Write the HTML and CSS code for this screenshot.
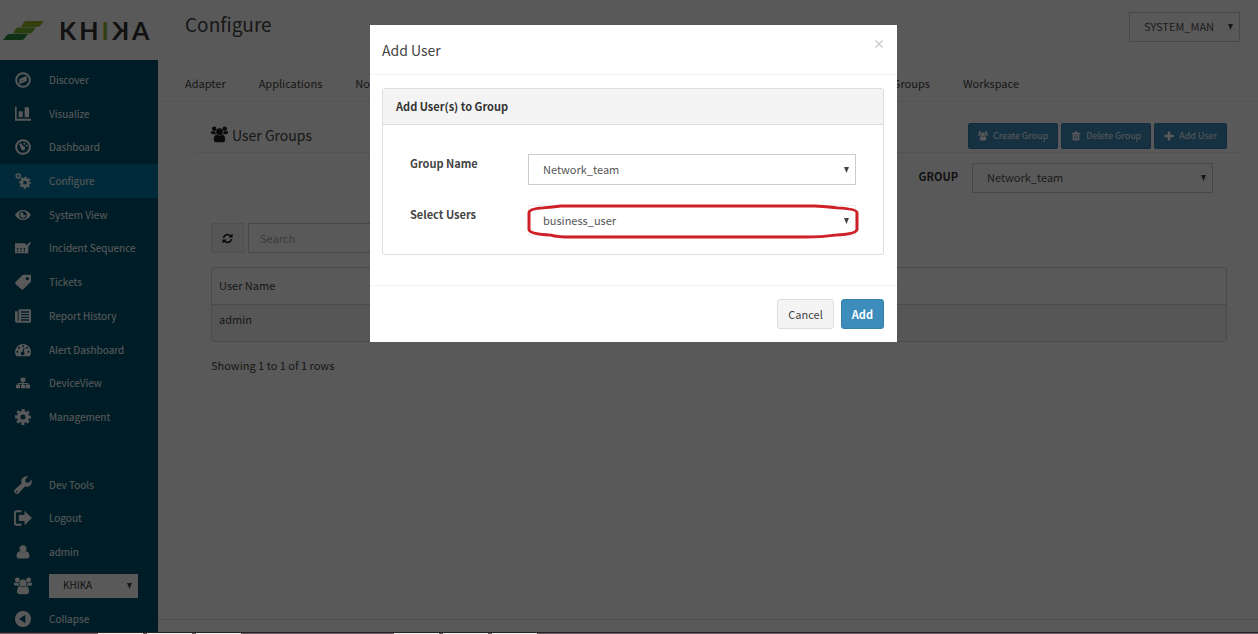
FILE: index.html
```html
<!DOCTYPE html>
<html lang="en">
<head>
    <meta charset="UTF-8">
    <meta name="viewport" content="width=device-width, initial-scale=1.0">
    <title>Khika - Configure</title>
    <link rel="stylesheet" href="styles.css">
</head>
<body>
    <!-- icon set -->
    <svg class="sprite" aria-hidden="true">
        <symbol id="i-compass" viewBox="0 0 24 24">
            <circle cx="12" cy="12" r="10.300" fill="none" stroke="currentColor" stroke-width="3"/>
            <path fill-rule="evenodd" d="M17.500 5.500v8L6.500 18.500v-8zM10 12.300v2l3-1.400z"/>
        </symbol>
        <symbol id="i-chart" viewBox="0 0 24 24">
            <path d="M0 1h2.500v18H24V22H0zM5.500 8h6v9h-6zM14.500 2h6.500v15h-6.500z"/>
        </symbol>
        <symbol id="i-dash" viewBox="0 0 24 24">
            <circle cx="12" cy="12" r="10.300" fill="none" stroke="currentColor" stroke-width="3"/>
            <path d="M6 7.500l2.300-1.500 4 4.500a3.200 3.200 0 1 1-3.500 2.600z"/>
            <circle cx="14" cy="7" r="1.500"/><circle cx="17.500" cy="10" r="1.500"/>
        </symbol>
        <symbol id="i-gear" viewBox="0 0 24 24">
            <circle cx="12" cy="12" r="6.500" fill="none" stroke="currentColor" stroke-width="5.400"/>
            <circle cx="12" cy="12" r="10" fill="none" stroke="currentColor" stroke-width="4" stroke-dasharray="4.400 3.454" stroke-dashoffset="2.200"/>
        </symbol>
        <symbol id="i-gears" viewBox="0 0 24 24">
            <circle cx="15" cy="14.500" r="4.900" fill="none" stroke="currentColor" stroke-width="4"/>
            <circle cx="15" cy="14.500" r="7.600" fill="none" stroke="currentColor" stroke-width="2.800" stroke-dasharray="3.400 2.569" stroke-dashoffset="1.700"/>
            <circle cx="5" cy="4.500" r="2.700" fill="none" stroke="currentColor" stroke-width="2"/>
            <circle cx="5" cy="4.500" r="4" fill="none" stroke="currentColor" stroke-width="1.400" stroke-dasharray="2 1.142" stroke-dashoffset="1"/>
        </symbol>
        <symbol id="i-eye" viewBox="0 0 24 24">
            <path fill-rule="evenodd" d="M0 12q5-7.500 12-7.500T24 12q-5 7.500-12 7.500T0 12zm12-5.600a5.600 5.600 0 1 0 0 11.200 5.600 5.600 0 0 0 0-11.200z"/>
            <path d="M12 8a4 4 0 1 0 4 4l-3.500.500z"/>
        </symbol>
        <symbol id="i-incident" viewBox="0 0 24 24">
            <path fill-rule="evenodd" d="M0 5h15l2.500 3L22 3l2 1.500-4 5.500v10H0zM3 12v2.500h2V12zm5 0v2.500h2V12zm5 0v2.500h2V12zM3 16v2h2v-2zm5 0v2h2v-2zm5 0v2h2v-2z"/>
        </symbol>
        <symbol id="i-tag" viewBox="0 0 24 24">
            <path fill-rule="evenodd" d="M13 1h9.500Q24 1 24 2.500V10q0 1.500-1 2.500L12.500 23q-1.500 1.300-3 0L.800 15q-1.300-1.500 0-3L11 2q1-1 2-1zm5.500 3.500a2.400 2.400 0 1 0 .01 0z"/>
        </symbol>
        <symbol id="i-news" viewBox="0 0 24 24">
            <path fill-rule="evenodd" d="M6 2h16.500Q24 2 24 3.500v17q0 1.500-1.500 1.500H3q-3 0-3-3V5h4v14h1.500V3zm3 3v2h12V5zm0 4v2h12V9zm0 4v2h12v-2zm0 4v2h12v-2z"/>
        </symbol>
        <symbol id="i-tacho" viewBox="0 0 24 24">
            <path fill-rule="evenodd" d="M2 21.500A12 12 0 1 1 22 21.500zM12 4.500a1.600 1.600 0 1 0 .01 0zM6 7a1.600 1.600 0 1 0 .01 0zm12 0a1.600 1.600 0 1 0 .01 0zM3.700 13a1.600 1.600 0 1 0 .01 0zm16.600 0a1.600 1.600 0 1 0 .01 0zM13.200 8.500L11 14.600a2.700 2.700 0 1 0 1.900.400l1.700-6z"/>
        </symbol>
        <symbol id="i-sitemap" viewBox="0 0 24 24">
            <path d="M8 3h8v7h-3v2h8v3h3v6h-7v-6h2v-1.500h-6V15h3v6H8.500v-6H11v-1.500H5V15h2v6H0v-6h3v-3h8v-2H8z"/>
        </symbol>
        <symbol id="i-wrench" viewBox="0 0 24 24">
            <path fill-rule="evenodd" d="M.500 18.500L10 10q-1-4.500 1.500-7.200T19 .500l-4 4 .500 4 4 .500 4-4q1 4.500-1.700 7.200T14.500 14L5.500 23.500q-2 1.200-4-.700T.500 18.500zm3 1.200a1 1 0 1 0 .01 0z"/>
        </symbol>
        <symbol id="i-logout" viewBox="0 0 24 24">
            <path d="M10 3H3.500Q1.300 3 1.300 5.200v13.600Q1.300 21 3.500 21H10" fill="none" stroke="currentColor" stroke-width="2.500"/>
            <path d="M6.500 8H14V2.500L24 12l-10 9.500V16H6.500z"/>
        </symbol>
        <symbol id="i-user" viewBox="0 0 24 24">
            <circle cx="12" cy="6.500" r="6"/>
            <path d="M6.500 10.500q5.500 4 11 0Q23 12 23 18.500q0 4.500-4 4.500h-14q-4 0-4-4.500 0-6.500 5.500-8z"/>
        </symbol>
        <symbol id="i-users" viewBox="0 0 24 24">
            <circle cx="4.500" cy="4" r="3.200"/><circle cx="19.500" cy="4" r="3.200"/><circle cx="12" cy="8" r="4.800"/>
            <path d="M7.500 12q4.500 3 9 0 3.500 1.500 3.500 7 0 4-3.500 4h-9Q4 23 4 19q0-5.500 3.500-7zM0 7.500h6q0 3 1.500 4H2.500Q0 11.500 0 9.500zM24 7.500h-6q0 3-1.500 4h5q2.500 0 2.500-2z"/>
        </symbol>
        <symbol id="i-collapse" viewBox="0 0 24 24">
            <path fill-rule="evenodd" d="M12 0a12 12 0 1 0 .01 0zM15.500 5.500v13L6 12z"/>
        </symbol>
        <symbol id="i-refresh" viewBox="0 0 24 24">
            <path d="M3 10.500a9.300 9.300 0 0 1 16-4M21 13.500a9.300 9.300 0 0 1-16 4" fill="none" stroke="currentColor" stroke-width="3.400"/>
            <path d="M23 1v9h-9zM1 23v-9h9z"/>
        </symbol>
        <symbol id="i-trash" viewBox="0 0 24 24">
            <path fill-rule="evenodd" d="M2 4h6l1-3h6l1 3h6v3H2zm2 4h16v13q0 2-2 2H6q-2 0-2-2zm3.500 2v10h1.500V10zm3.800 0v10h1.500V10zm3.700 0v10h1.500V10z"/>
        </symbol>
        <symbol id="i-plus" viewBox="0 0 24 24">
            <path d="M9 1h6v8h8v6h-8v8H9v-8H1V9h8z"/>
        </symbol>
    </svg>

    <div class="app">
        <aside class="side">
            <a class="logo" href="#" aria-label="Khika">
                <svg class="logo-mark" viewBox="0 0 41 19" aria-hidden="true">
                    <path d="M23 0h18l-4 5q-1 1-3 1H18l3-5q1-1 2-1z" fill="#98b52a"/>
                    <path d="M15 6.500h18l-4 5q-1 1-3 1H10l3-5q1-1 2-1z" fill="#78b52f"/>
                    <path d="M6 13h19l-4 5q-1 1-3 1H0l4-5q1-1 2-1z" fill="#2a8a3c"/>
                </svg>
                <span class="logo-text"><span>K</span><span>H</span><span class="green">I</span><span class="mirror">K</span><span>A</span></span>
            </a>
            <nav class="menu">
                <ul class="menu-top">
                    <li><a href="#"><svg class="icon"><use href="#i-compass"/></svg>Discover</a></li>
                    <li><a href="#"><svg class="icon"><use href="#i-chart"/></svg>Visualize</a></li>
                    <li><a href="#"><svg class="icon"><use href="#i-dash"/></svg>Dashboard</a></li>
                    <li class="active"><a href="#"><svg class="icon"><use href="#i-gears"/></svg>Configure</a></li>
                    <li><a href="#"><svg class="icon"><use href="#i-eye"/></svg>System View</a></li>
                    <li><a href="#"><svg class="icon"><use href="#i-incident"/></svg>Incident Sequence</a></li>
                    <li><a href="#"><svg class="icon"><use href="#i-tag"/></svg>Tickets</a></li>
                    <li><a href="#"><svg class="icon"><use href="#i-news"/></svg>Report History</a></li>
                    <li><a href="#"><svg class="icon"><use href="#i-tacho"/></svg>Alert Dashboard</a></li>
                    <li><a href="#"><svg class="icon small"><use href="#i-sitemap"/></svg>DeviceView</a></li>
                    <li><a href="#"><svg class="icon"><use href="#i-gear"/></svg>Management</a></li>
                </ul>
                <ul class="menu-bottom">
                    <li><a href="#"><svg class="icon large"><use href="#i-wrench"/></svg>Dev Tools</a></li>
                    <li><a href="#"><svg class="icon large"><use href="#i-logout"/></svg>Logout</a></li>
                    <li><a href="#"><svg class="icon small"><use href="#i-user"/></svg>admin</a></li>
                    <li class="tenant">
                        <svg class="icon large"><use href="#i-users"/></svg>
                        <select class="select" aria-label="Tenant"><option>KHIKA</option></select>
                    </li>
                    <li><a href="#"><svg class="icon"><use href="#i-collapse"/></svg>Collapse</a></li>
                </ul>
            </nav>
        </aside>

        <main class="main">
            <header class="top">
                <h1>Configure</h1>
                <select class="select workspace" aria-label="Workspace"><option>SYSTEM_MAN</option></select>
            </header>
            <nav class="tabs">
                <a href="#">Adapter</a>
                <a href="#">Applications</a>
                <a href="#">Nodes</a>
                <a href="#" class="tab-right">User Groups</a>
                <a href="#">Workspace</a>
            </nav>
            <section class="content">
                <div class="title-row">
                    <h2><svg class="icon"><use href="#i-users"/></svg>User Groups</h2>
                    <div class="actions">
                        <button class="btn-sm"><svg class="icon"><use href="#i-users"/></svg>Create Group</button>
                        <button class="btn-sm"><svg class="icon"><use href="#i-trash"/></svg>Delete Group</button>
                        <button class="btn-sm"><svg class="icon"><use href="#i-plus"/></svg>Add User</button>
                    </div>
                </div>
                <div class="filter">
                    <label for="group">GROUP</label>
                    <select class="select" id="group"><option>Network_team</option></select>
                </div>
                <div class="toolbar">
                    <button class="refresh" aria-label="Refresh"><svg class="icon"><use href="#i-refresh"/></svg></button>
                    <input class="search" type="text" placeholder="Search" aria-label="Search">
                </div>
                <div class="table-box">
                    <table>
                        <thead><tr><th>User Name</th></tr></thead>
                        <tbody><tr><td>admin</td></tr></tbody>
                    </table>
                </div>
                <p class="rows-info">Showing 1 to 1 of 1 rows</p>
            </section>
            <div class="bottom-line"></div>
        </main>
    </div>

    <!-- Add user dialog -->
    <div class="backdrop">
        <div class="modal" role="dialog" aria-labelledby="modal-title">
            <div class="modal-header">
                <h3 id="modal-title">Add User</h3>
                <button class="close" aria-label="Close">×</button>
            </div>
            <div class="modal-body">
                <div class="panel">
                    <h4>Add User(s) to Group</h4>
                    <div class="panel-body">
                        <div class="field">
                            <label for="group-name">Group Name</label>
                            <select class="select" id="group-name"><option>Network_team</option></select>
                        </div>
                        <div class="field">
                            <label for="users">Select Users</label>
                            <div class="marked">
                                <select class="select" id="users"><option>business_user</option></select>
                                <svg class="marker" viewBox="0 0 332 36" preserveAspectRatio="none" aria-hidden="true">
                                    <path d="M34 2H288Q305 3 310 4Q330 5 330 9V26Q330 31 308 32Q295 34 278 34H45Q30 34 24 32Q2 31 2 26V9Q2 5 16 4Q26 3 34 2Z"/>
                                </svg>
                            </div>
                        </div>
                    </div>
                </div>
            </div>
            <div class="modal-footer">
                <button class="btn">Cancel</button>
                <button class="btn primary">Add</button>
            </div>
        </div>
    </div>
    <div class="strip"><i></i><i></i><i></i><i class="far"></i><i></i><i></i></div>
</body>
</html>
```
FILE: styles.css
```css
* {
    box-sizing: border-box;
}
body {
    margin: 0;
    height: 100vh;
    display: flex;
    flex-direction: column;
    overflow: hidden;
    font-family: "Noto Sans CJK SC", "Liberation Sans", sans-serif;
    font-size: 11px;
    line-height: 18px;
    color: #444;
    background-color: #fff;
}
h1, h2, h3, h4, p, ul {
    margin: 0;
    padding: 0;
    font-weight: normal;
}
ul {
    list-style: none;
}
a {
    color: inherit;
    text-decoration: none;
}
button, input, select {
    font: inherit;
    color: inherit;
}
button {
    cursor: pointer;
}
.sprite {
    display: none;
}
.icon {
    width: 16px;
    height: 16px;
    flex: none;
    fill: currentColor;
}
.select {
    height: 31px;
    padding: 0 20px 2px 14px;
    border: 1px solid #ccc;
    border-radius: 0;
    appearance: none;
    color: #555;
    background: #fff url("data:image/svg+xml,%3Csvg xmlns='http://www.w3.org/2000/svg' width='5' height='6'%3E%3Cpath d='M0 0h5L2.5 6z' fill='%23444'/%3E%3C/svg%3E") no-repeat right 6px center;
}

/* layout */
.app {
    flex: 1;
    min-height: 0;
    display: flex;
}
.side {
    width: 158px;
    flex: none;
    display: flex;
    flex-direction: column;
}
.main {
    flex: 1;
    display: flex;
    flex-direction: column;
}

/* sidebar */
.logo {
    height: 60px;
    flex: none;
    display: flex;
    align-items: center;
    gap: 15px;
    padding-left: 3px;
}
.logo-mark {
    width: 41px;
    height: 19px;
}
.logo-text {
    display: flex;
    gap: 3px;
    font-family: Lato, sans-serif;
    font-size: 25px;
    line-height: 30px;
    font-weight: bold;
    color: #333;
}
.green {
    color: #86b52d;
}
.mirror {
    transform: scaleX(-1);
}
.menu {
    flex: 1;
    min-height: 0;
    overflow: hidden;
    padding-top: 3px;
    font-size: 10px;
    color: #fff;
    background-color: #005571;
}
.menu-top, .menu-bottom {
    display: grid;
    grid-auto-rows: 1fr;
    height: 371px;
}
.menu-bottom {
    height: 168px;
    margin-top: 34px;
}
.menu li {
    display: flex;
    align-items: center;
}
.menu li.active {
    background-color: #0079a5;
}
.menu a, .tenant {
    display: grid;
    grid-template-columns: 46px 1fr;
    align-items: center;
    padding-left: 3px;
}
.menu .tenant {
    display: grid;
}
.menu .icon {
    justify-self: center;
    margin-right: 6px;
}
.menu .small {
    width: 14px;
    height: 14px;
}
.menu .large {
    width: 18px;
    height: 18px;
}
.tenant .select {
    width: 89px;
    height: 24px;
    border: 0;
    color: #333;
}

/* header and tabs */
.top {
    height: 60px;
    display: flex;
    justify-content: space-between;
    align-items: flex-start;
    padding: 11px 18px 0 27px;
}
h1 {
    font-size: 19px;
    line-height: 26px;
}
.workspace {
    width: 111px;
    height: 30px;
    margin-top: 1px;
}
.tabs {
    display: flex;
    gap: 33px;
    height: 42px;
    padding: 14px 239px 0 27px;
    border-bottom: 1px solid #eee;
}
.tab-right {
    margin-left: auto;
}

/* user groups */
.content {
    flex: 1;
    padding: 17px 25px 0 45px;
}
.title-row {
    display: flex;
    justify-content: space-between;
    align-items: center;
    height: 34px;
    margin: 0 -6px 0 -8px;
    padding: 0 12px 0 8px;
    border-bottom: 1px solid #eee;
}
h2 {
    display: flex;
    align-items: center;
    gap: 4px;
    padding: 0 0 2px 8px;
    font-size: 14px;
    line-height: 20px;
}
h2 .icon {
    width: 17px;
    height: 17px;
    color: #222;
}
.actions {
    display: flex;
    gap: 3px;
}
.btn-sm {
    display: flex;
    align-items: center;
    gap: 5px;
    height: 26px;
    padding: 0 9px;
    border: 1px solid #367fa9;
    border-radius: 2px;
    font-size: 9px;
    color: #fff;
    background-color: #3c8dbc;
}
.btn-sm .icon {
    width: 10px;
    height: 10px;
}
.filter {
    display: flex;
    justify-content: flex-end;
    gap: 14px;
    padding: 10px 20px 0 0;
}
.filter label {
    padding-top: 4px;
    font-weight: bold;
    color: #333;
}
.filter .select {
    width: 241px;
    height: 30px;
}
.toolbar {
    display: flex;
    gap: 4px;
    margin: 30px 6px 14px 8px;
}
.refresh {
    display: flex;
    align-items: center;
    justify-content: center;
    width: 33px;
    height: 30px;
    padding: 0;
    border: 1px solid #e2e2e2;
    background-color: #f6f6f6;
}
.refresh .icon {
    width: 11px;
    height: 11px;
    color: #111;
}
.search {
    width: 200px;
    height: 30px;
    padding: 0 11px;
    border: 1px solid #ccc;
}
.search::placeholder {
    color: #aaa;
}
.table-box {
    margin: 0 6px 0 8px;
    border: 1px solid #d4d4d4;
    border-radius: 3px;
}
table {
    width: 100%;
    border-collapse: collapse;
}
th, td {
    height: 36px;
    padding: 0 7px 2px;
    text-align: left;
    font-weight: normal;
}
td {
    height: 37px;
    padding-bottom: 8px;
    border-top: 1px solid #d4d4d4;
    background-color: #f7f7f7;
}
.rows-info {
    margin: 14px 8px 0;
}
.bottom-line {
    height: 13px;
    border-top: 1px solid #e4e4e4;
}

/* dialog */
.backdrop {
    position: fixed;
    inset: 0 0 2px 0;
    display: flex;
    justify-content: center;
    align-items: flex-start;
    padding: 25px 0 0 9px;
    background-color: rgba(0, 0, 0, 0.65);
}
.modal {
    width: 527px;
    background-color: #fff;
}
.modal-header {
    display: flex;
    justify-content: space-between;
    align-items: flex-start;
    padding: 15px 12px 14px;
    border-bottom: 1px solid #f2f2f2;
}
h3 {
    font-size: 14px;
    line-height: 20px;
}
.close {
    padding: 0;
    border: 0;
    line-height: 8px;
    font-size: 12px;
    font-weight: bold;
    color: #ccc;
    background: none;
}
.modal-body {
    padding: 13px 13px 30px 12px;
}
.panel {
    border: 1px solid #ddd;
    border-radius: 3px;
}
h4 {
    padding: 8px 13px 9px;
    border-bottom: 1px solid #ddd;
    font-size: 11px;
    font-weight: bold;
    color: #333;
    background-color: #f4f4f4;
}
.panel-body {
    display: flex;
    flex-direction: column;
    gap: 20px;
    padding: 29px 27px 18px;
}
.field {
    display: grid;
    grid-template-columns: 118px 1fr;
}
.field label {
    font-weight: bold;
}
.field .select {
    width: 100%;
}
.marked {
    position: relative;
}
.marked .select {
    border-color: #eee;
}
.marker {
    position: absolute;
    left: -1px;
    top: -1px;
    width: calc(100% + 4px);
    height: 35px;
    overflow: visible;
    pointer-events: none;
    fill: none;
    stroke: #cf2027;
    stroke-width: 3px;
}
.modal-footer {
    display: flex;
    justify-content: flex-end;
    gap: 7px;
    padding: 13px;
    border-top: 1px solid #f2f2f2;
}
.btn {
    height: 30px;
    padding: 0 10px;
    border: 1px solid #ddd;
    border-radius: 3px;
    background-color: #f4f4f4;
}
.btn.primary {
    border-color: #367fa9;
    font-weight: bold;
    color: #fff;
    background-color: #3c8dbc;
}

/* strip at the window's bottom edge */
.strip {
    display: flex;
    gap: 4px;
    flex: none;
    height: 2px;
    padding-left: 98px;
    border-top: 1px solid #222;
    background-color: #6b6166;
}
.strip i {
    width: 45px;
    background-color: #eee;
}
.strip .far {
    margin-left: 149px;
}
```
